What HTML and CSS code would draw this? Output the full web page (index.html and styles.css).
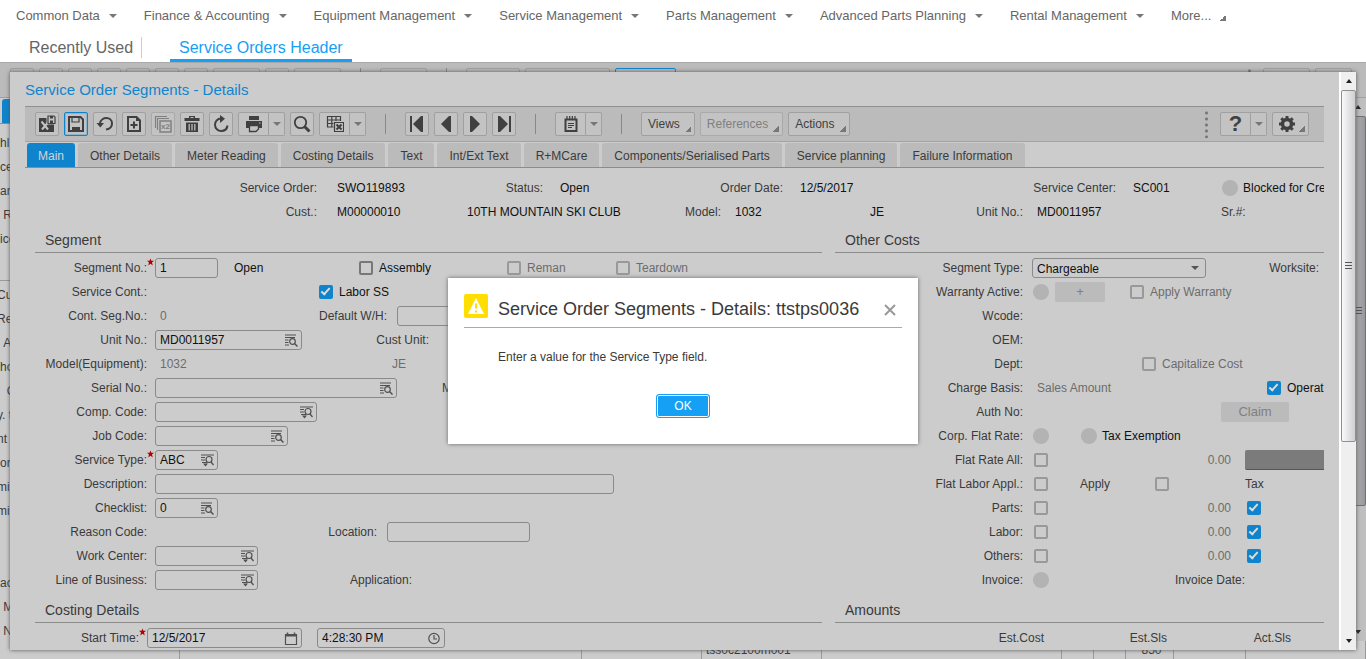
FILE: index.html
```html
<!DOCTYPE html>
<html lang="en">
<head>
<meta charset="utf-8">
<title>Service Order Segments - Details</title>
<link rel="stylesheet" href="styles.css">
</head>
<body>
<svg class="symbols" aria-hidden="true">
  <symbol id="i-save-exit" viewBox="0 0 18 18"><path d="M1 3h8v6h7v8H1z" fill="currentColor"/><path d="M3.500 6.500l6.500 8M10 7.500l-6 7" stroke="#c3c3c3" stroke-width="2"/><path d="M8.500 0H18v9.500H8.500z" fill="#c3c3c3"/><path d="M10 1h6l1 1v6.500h-7z" fill="none" stroke="currentColor" stroke-width="1.200"/><path d="M12 1h3v2.500h-3zM12 5.500h3v3h-3z" fill="currentColor"/></symbol>
  <symbol id="i-save" viewBox="0 0 18 18"><path d="M2 2h11.500L16 4.500V16H2z" fill="none" stroke="currentColor" stroke-width="2"/><path d="M5 2v5h7V2" fill="none" stroke="currentColor" stroke-width="1.200"/><path d="M5 12h8v4H5z" fill="currentColor"/></symbol>
  <symbol id="i-undo" viewBox="0 0 18 18"><path d="M4 8.500C4.500 4.500 8 3 10.500 3c3 0 5.500 2.300 5.500 5.500S13.500 14 10 14.500" fill="none" stroke="currentColor" stroke-width="2"/><path d="M.5 8h7.500l-3.700 4.500z" fill="currentColor"/></symbol>
  <symbol id="i-new" viewBox="0 0 18 18"><path d="M3 2h8.500L15 5.500V16H3z" fill="none" stroke="currentColor" stroke-width="2"/><path d="M11 2v4h4z" fill="currentColor"/><path d="M9 6.500v7M5.500 10h7" stroke="currentColor" stroke-width="2"/></symbol>
  <symbol id="i-dup" viewBox="0 0 18 18"><path d="M1.500 13V1.500H13M3.500 15V3.500H15" fill="none" stroke="currentColor" stroke-width="1.200"/><path d="M6 6h11v11H6z" fill="none" stroke="currentColor" stroke-width="1.500"/><text x="7" y="14" font-size="8" font-weight="bold" fill="currentColor" font-family="Liberation Sans, sans-serif">x2</text></symbol>
  <symbol id="i-trash" viewBox="0 0 18 18"><path d="M6 1h6v2h4.500v3h-15V3H6zM3 7.500h12V17H3z" fill="currentColor"/><path d="M7.500 2.500h3M6.200 9v6.500M9 9v6.500M11.800 9v6.500" stroke="#c3c3c3" stroke-width="1.200"/></symbol>
  <symbol id="i-refresh" viewBox="0 0 18 18"><path d="M9 3.500C5.500 3.500 3 6.500 3 9.800c0 3.500 2.800 6.200 6.200 6.200 3.300 0 5.800-2 6.300-5.500" fill="none" stroke="currentColor" stroke-width="2"/><path d="M8 0l5 3.700L8 8z" fill="currentColor"/></symbol>
  <symbol id="i-print" viewBox="0 0 18 18"><path d="M4 1h10v4H4zM1 6h16v7H1z" fill="currentColor"/><path d="M4.500 10.500h9v3.500l-2.500 2.500H4.500z" fill="#c3c3c3" stroke="currentColor" stroke-width="1.300"/><path d="M14 8h1.500" stroke="#c3c3c3" stroke-width="1.200"/></symbol>
  <symbol id="i-search" viewBox="0 0 18 18"><circle cx="7.500" cy="7.500" r="5.700" fill="none" stroke="currentColor" stroke-width="1.800"/><path d="M11.500 11.500l5 5" stroke="currentColor" stroke-width="3"/></symbol>
  <symbol id="i-table" viewBox="0 0 18 18"><path d="M1.500 1.500h13M1.500 5h13M1.500 8.500h6M1.500 12h6M1.500 1v11.500M5.800 1v11.500M10 1v5M14.500 1v5" stroke="currentColor" stroke-width="1.200" fill="none"/><path d="M8.500 7.500h9v9h-9z" fill="#c3c3c3" stroke="currentColor" stroke-width="1.200"/><path d="M10.500 9.500l5 5M15.500 9.500l-5 5" stroke="currentColor" stroke-width="2"/></symbol>
  <symbol id="i-first" viewBox="0 0 18 18"><path d="M2 1h2v16H2zM15 1v16h-2L5 9l8-8z" fill="currentColor"/></symbol>
  <symbol id="i-prev" viewBox="0 0 18 18"><path d="M14 1v16h-2L4 9l8-8z" fill="currentColor"/></symbol>
  <symbol id="i-next" viewBox="0 0 18 18"><path d="M4 1v16h2l8-8-8-8z" fill="currentColor"/></symbol>
  <symbol id="i-last" viewBox="0 0 18 18"><path d="M14 1h2v16h-2zM3 1v16h2l8-8-8-8z" fill="currentColor"/></symbol>
  <symbol id="i-note" viewBox="0 0 18 18"><path d="M3.500 4.500h11v11.500h-11z" fill="none" stroke="currentColor" stroke-width="2"/><path d="M5 1v3M7.700 1v3M10.300 1v3M13 1v3M6 8.500h6M6 10.500h6M6 12.500h4" stroke="currentColor" stroke-width="1.200"/></symbol>
  <symbol id="i-gear" viewBox="0 0 18 18"><circle cx="9" cy="9" r="4.500" fill="none" stroke="currentColor" stroke-width="3.500"/><path d="M9 1v3M9 14v3M1 9h3M14 9h3M3.300 3.300l2 2M12.700 12.700l2 2M3.300 14.700l2-2M12.700 5.300l2-2" stroke="currentColor" stroke-width="3"/></symbol>
  <symbol id="i-zoom" viewBox="0 0 14 13"><path d="M1 1h11M1 3.500h10M1 6h3.500M1 8.500h3.500M1 11h4" stroke="currentColor"/><circle cx="8.500" cy="7.500" r="2.800" fill="none" stroke="currentColor" stroke-width="1.200"/><path d="M10.500 9.500l3 3" stroke="currentColor" stroke-width="1.500"/></symbol>
  <symbol id="i-zoomdown" viewBox="0 0 14 13"><path d="M1 1h13M1 3.500h4M1 6h4M2 8.500h4" stroke="currentColor"/><circle cx="9" cy="5.500" r="3" fill="none" stroke="currentColor" stroke-width="1.200"/><path d="M11 8l2.500 3M7 8l-1 1" stroke="currentColor" stroke-width="1.300"/><path d="M3 9.500h5L5.500 12.500z" fill="currentColor"/></symbol>
  <symbol id="i-cal" viewBox="0 0 14 13"><path d="M1.500 2.500h11v10h-11z" fill="none" stroke="currentColor" stroke-width="1.200"/><path d="M1 3.500h12" stroke="currentColor" stroke-width="2"/><path d="M3.500.5v3M10.500.5v3" stroke="currentColor" stroke-width="1.500"/></symbol>
  <symbol id="i-clock" viewBox="0 0 14 13"><circle cx="7" cy="6.500" r="5.200" fill="none" stroke="currentColor" stroke-width="1.200"/><path d="M7 3v4h3" fill="none" stroke="currentColor" stroke-width="1.200"/></symbol>
  <symbol id="i-star" viewBox="0 0 8 8"><path d="M4 0l1 2.700h3L5.700 4.600 6.600 8 4 6 1.400 8l.9-3.400L0 2.700h3z" fill="#b00000"/></symbol>
</svg>

<header class="top">
  <nav class="menu">
    <a href="#">Common Data<i class="tri"></i></a>
    <a href="#">Finance &amp; Accounting<i class="tri"></i></a>
    <a href="#">Equipment Management<i class="tri"></i></a>
    <a href="#">Service Management<i class="tri"></i></a>
    <a href="#">Parts Management<i class="tri"></i></a>
    <a href="#">Advanced Parts Planning<i class="tri"></i></a>
    <a href="#">Rental Management<i class="tri"></i></a>
    <a href="#">More...<i class="corner"></i></a>
  </nav>
  <nav class="views">
    <a href="#" class="recent">Recently Used</a>
    <a href="#" class="current">Service Orders Header</a>
  </nav>
</header>

<main class="stage">
  <div class="back" aria-hidden="true">
    <div class="back-bar">
      <i class="bb"></i><i class="bb"></i><i class="bb"></i><i class="bb"></i><i class="bb"></i><i class="bb"></i><i class="bb"></i><i class="bb split-b"></i><i class="bb"></i><i class="bb split-b"></i>
      <i class="sep"></i><i class="bb split-b"></i><i class="sep"></i>
      <i class="bb w54"></i><i class="bb w85"></i><i class="bb w61 on"></i>
      <i class="dots push"></i><i class="bb split-b"></i><i class="bb w37"></i>
    </div>
    <div class="back-mid">
      <div class="back-form">
        <div class="back-tabs"><i></i></div>
        <div class="frags">
          <span>hl</span><span>ce</span><span>are</span><span>&nbsp;R</span><span>ice</span>
          <span class="frag-line"></span>
          <span class="pull">Cu</span><span class="pull">Re</span><span>&nbsp;A</span><span>ho</span><span>&nbsp;&nbsp;C</span><span class="pull">y. t</span><span class="pull">nt I</span><span>or</span><span class="pull">mi</span><span class="pull">mi</span><span></span><span></span><span>ac</span><span>&nbsp;M</span><span>&nbsp;N</span>
        </div>
      </div>
      <div class="scroll dim"><i class="up"></i><div class="track"><div class="thumb"><i class="grip"></i></div></div><i class="down"></i></div>
    </div>
    <div class="back-grid"><span></span><span></span><span></span><span class="code">tss0c2100m001</span><span></span><span></span><span></span><span class="num">850</span><span></span><span></span></div>
  </div>

  <section class="popup" aria-label="Service Order Segments - Details">
    <div class="popup-body">
      <h1>Service Order Segments - Details</h1>
      <div class="toolbar">
        <button class="btn" aria-label="Save and exit"><svg><use href="#i-save-exit"/></svg></button>
        <button class="btn on" aria-label="Save"><svg><use href="#i-save"/></svg></button>
        <button class="btn" aria-label="Undo"><svg><use href="#i-undo"/></svg></button>
        <button class="btn" aria-label="New"><svg><use href="#i-new"/></svg></button>
        <button class="btn" aria-label="Duplicate" disabled><svg><use href="#i-dup"/></svg></button>
        <button class="btn" aria-label="Delete"><svg><use href="#i-trash"/></svg></button>
        <button class="btn" aria-label="Refresh"><svg><use href="#i-refresh"/></svg></button>
        <div class="split"><button class="btn" aria-label="Print"><svg><use href="#i-print"/></svg></button><button class="btn drop" aria-label="Print options"><i class="tri"></i></button></div>
        <button class="btn" aria-label="Find"><svg><use href="#i-search"/></svg></button>
        <div class="split"><button class="btn" aria-label="Export"><svg><use href="#i-table"/></svg></button><button class="btn drop" aria-label="Export options"><i class="tri"></i></button></div>
        <i class="sep"></i>
        <button class="btn" aria-label="First"><svg><use href="#i-first"/></svg></button>
        <button class="btn" aria-label="Previous"><svg><use href="#i-prev"/></svg></button>
        <button class="btn" aria-label="Next"><svg><use href="#i-next"/></svg></button>
        <button class="btn" aria-label="Last"><svg><use href="#i-last"/></svg></button>
        <i class="sep"></i>
        <div class="split"><button class="btn" aria-label="Notes"><svg><use href="#i-note"/></svg></button><button class="btn drop" aria-label="Note options"><i class="tri"></i></button></div>
        <i class="sep"></i>
        <button class="btn text">Views<i class="corner"></i></button>
        <button class="btn text" disabled>References<i class="corner"></i></button>
        <button class="btn text">Actions<i class="corner"></i></button>
        <i class="dots push"></i>
        <div class="split"><button class="btn help">?</button><button class="btn drop" aria-label="Help options"><i class="tri"></i></button></div>
        <button class="btn gear" aria-label="Settings"><svg><use href="#i-gear"/></svg><i class="corner"></i></button>
      </div>
      <nav class="tabs">
        <a href="#" class="active">Main</a><a href="#">Other Details</a><a href="#">Meter Reading</a><a href="#">Costing Details</a><a href="#">Text</a><a href="#">Int/Ext Text</a><a href="#">R+MCare</a><a href="#">Components/Serialised Parts</a><a href="#">Service planning</a><a href="#">Failure Information</a>
      </nav>

      <div class="summary">
        <div class="row s1"><span class="lb">Service Order:</span><b>SWO119893</b><span class="lb">Status:</span><b>Open</b><span class="lb">Order Date:</span><b>12/5/2017</b><span class="lb">Service Center:</span><b>SC001</b><span class="flag"><i class="dot"></i><b>Blocked for Credit</b></span></div>
        <div class="row s2"><span class="lb">Cust.:</span><b>M00000010</b><b>10TH MOUNTAIN SKI CLUB</b><span class="lb">Model:</span><b>1032</b><b>JE</b><span class="lb">Unit No.:</span><b>MD0011957</b><span>Sr.#:</span></div>
      </div>

      <div class="columns">
        <div class="left">
          <h2>Segment</h2>
          <div class="row l1"><label class="lb" for="seg">Segment No.:<svg class="star"><use href="#i-star"/></svg></label><span class="field w63"><input id="seg" value="1"></span><b>Open</b><label class="chk strong"><input type="checkbox">Assembly</label><label class="chk off"><input type="checkbox" disabled>Reman</label><label class="chk off"><input type="checkbox" disabled>Teardown</label></div>
          <div class="row l2"><span class="lb">Service Cont.:</span><span></span><label class="chk strong"><input type="checkbox" checked>Labor SS</label></div>
          <div class="row l3"><span class="lb">Cont. Seg.No.:</span><span class="ro">0</span><label class="lb" for="wh">Default W/H:</label><span class="field w143"><input id="wh"></span></div>
          <div class="row l4"><label class="lb" for="unit">Unit No.:</label><span class="field w147"><input id="unit" value="MD0011957"><svg><use href="#i-zoom"/></svg></span><span class="lb">Cust Unit:</span></div>
          <div class="row l5"><span class="lb">Model(Equipment):</span><span class="ro">1032</span><span class="ro">JE</span></div>
          <div class="row l6"><label class="lb" for="serial">Serial No.:</label><span class="field w242"><input id="serial"><svg><use href="#i-zoom"/></svg></span><span>Model:</span></div>
          <div class="row"><label class="lb" for="comp">Comp. Code:</label><span class="field w162"><input id="comp"><svg><use href="#i-zoomdown"/></svg></span></div>
          <div class="row"><label class="lb" for="job">Job Code:</label><span class="field w133"><input id="job"><svg><use href="#i-zoom"/></svg></span></div>
          <div class="row"><label class="lb" for="stype">Service Type:<svg class="star"><use href="#i-star"/></svg></label><span class="field w63"><input id="stype" value="ABC"><svg><use href="#i-zoomdown"/></svg></span></div>
          <div class="row"><label class="lb" for="desc">Description:</label><span class="field w459"><input id="desc"></span></div>
          <div class="row"><label class="lb" for="check">Checklist:</label><span class="field w63"><input id="check" value="0"><svg><use href="#i-zoom"/></svg></span></div>
          <div class="row l12"><span class="lb">Reason Code:</span><label class="lb" for="loc">Location:</label><span class="field w143"><input id="loc"></span></div>
          <div class="row"><label class="lb" for="wc">Work Center:</label><span class="field w103"><input id="wc"><svg><use href="#i-zoomdown"/></svg></span></div>
          <div class="row l14"><label class="lb" for="lob">Line of Business:</label><span class="field w103"><input id="lob"><svg><use href="#i-zoomdown"/></svg></span><span>Application:</span></div>
          <h2 class="next">Costing Details</h2>
          <div class="row l15"><label class="lb" for="sdate">Start Time:<svg class="star"><use href="#i-star"/></svg></label><span class="field w155"><input id="sdate" value="12/5/2017"><svg><use href="#i-cal"/></svg></span><span class="field w128"><input aria-label="Start time of day" value="4:28:30 PM"><svg><use href="#i-clock"/></svg></span></div>
        </div>

        <div class="right">
          <h2>Other Costs</h2>
          <div class="row r1"><label class="lb" for="segtype">Segment Type:</label><span class="select"><select id="segtype"><option>Chargeable</option></select><i class="tri"></i></span><span class="lb">Worksite:</span></div>
          <div class="row r2"><span class="lb">Warranty Active:</span><i class="dot"></i><button class="flat w50" disabled>+</button><label class="chk off"><input type="checkbox" disabled>Apply Warranty</label></div>
          <div class="row"><span class="lb">Wcode:</span></div>
          <div class="row"><span class="lb">OEM:</span></div>
          <div class="row r5"><span class="lb">Dept:</span><label class="chk off"><input type="checkbox" disabled>Capitalize Cost</label></div>
          <div class="row r6"><span class="lb">Charge Basis:</span><span class="ro">Sales Amount</span><label class="chk strong"><input type="checkbox" checked>Operational</label></div>
          <div class="row r7"><span class="lb">Auth No:</span><button class="flat w68" disabled>Claim</button></div>
          <div class="row r8"><span class="lb">Corp. Flat Rate:</span><i class="dot"></i><span class="flag"><i class="dot"></i><b>Tax Exemption</b></span></div>
          <div class="row cost"><label class="lb" for="fra">Flat Rate All:</label><span class="chk off"><input id="fra" type="checkbox" disabled></span><span class="amt">0.00</span><i class="block"></i></div>
          <div class="row r10"><label class="lb" for="fla">Flat Labor Appl.:</label><span class="chk off"><input id="fla" type="checkbox" disabled></span><label for="app">Apply</label><span class="chk off"><input id="app" type="checkbox" disabled></span><span>Tax</span></div>
          <div class="row cost"><label class="lb" for="parts">Parts:</label><span class="chk off"><input id="parts" type="checkbox" disabled></span><span class="amt">0.00</span><span class="chk"><input aria-label="Parts tax" type="checkbox" checked></span></div>
          <div class="row cost"><label class="lb" for="labor">Labor:</label><span class="chk off"><input id="labor" type="checkbox" disabled></span><span class="amt">0.00</span><span class="chk"><input aria-label="Labor tax" type="checkbox" checked></span></div>
          <div class="row cost"><label class="lb" for="others">Others:</label><span class="chk off"><input id="others" type="checkbox" disabled></span><span class="amt">0.00</span><span class="chk"><input aria-label="Others tax" type="checkbox" checked></span></div>
          <div class="row r14"><span class="lb">Invoice:</span><i class="dot"></i><span class="lb">Invoice Date:</span></div>
          <h2 class="next">Amounts</h2>
          <div class="row r15"><span class="amt-h">Est.Cost</span><span class="amt-h">Est.Sls</span><span class="amt-h">Act.Sls</span></div>
        </div>
      </div>
    </div>
    <div class="scroll"><i class="up"></i><div class="track"><div class="thumb"><i class="grip"></i></div></div><i class="down"></i></div>
  </section>

  <div class="overlay">
    <section class="dialog" role="dialog" aria-labelledby="dlg-title">
      <header>
        <svg class="warn" viewBox="0 0 24 24" aria-hidden="true"><rect width="24" height="24" rx="2" fill="#ffde00"/><path d="M12 4l8 16H4z" fill="#fff"/><path d="M12 9.500v5M12 16.500v2" stroke="#ffde00" stroke-width="2"/></svg>
        <h2 id="dlg-title">Service Order Segments - Details: ttstps0036</h2>
        <button class="close" aria-label="Close"><svg viewBox="0 0 12 12"><path d="M1 1l10 10M11 1L1 11" stroke="#999" stroke-width="2"/></svg></button>
      </header>
      <p>Enter a value for the Service Type field.</p>
      <button class="ok">OK</button>
    </section>
  </div>
</main>
</body>
</html>
```
FILE: styles.css
```css
* { box-sizing: border-box; }

body {
  margin: 0;
  height: 100vh;
  overflow: hidden;
  display: flex;
  flex-direction: column;
  background: #fff;
  color: #3a3a3a;
  font: 12px/20px "Liberation Sans", Arial, sans-serif;
}

a { color: inherit; text-decoration: none; white-space: nowrap; }
b { font-weight: normal; color: #111; }
i { display: block; flex: none; }
h1, h2, p { margin: 0; font-weight: normal; }
button, input, select { font: inherit; color: inherit; margin: 0; }
.symbols { display: none; }

/* Top navigation */
.top { flex: none; border-bottom: 1px solid #aaa; color: #666; }
.menu { display: flex; gap: 27px; height: 32px; padding-left: 16px; font-size: 13px; }
.menu a { display: flex; align-items: center; gap: 9px; }
.views { display: flex; height: 30px; padding-left: 29px; font-size: 16px; line-height: 32px; }
.recent { position: relative; padding-right: 37px; }
.recent::after { content: ""; position: absolute; right: 28px; top: 5px; height: 21px; border-left: 1px solid #ccc; }
.current { padding: 0 9px; color: #16a0f5; border-bottom: 3px solid #16a0f5; }

.tri { border: 4px solid transparent; border-top-color: #777; border-bottom: 0; }
.corner { width: 6px; height: 6px; background: linear-gradient(135deg, transparent 50%, #777 50%); }
.menu .corner { margin-top: 3px; }

/* Page behind the popup */
.stage { flex: 1; min-height: 0; position: relative; background: #ccc; }
.back { height: 100%; display: flex; flex-direction: column; overflow: hidden; }
.back-bar { flex: none; display: flex; gap: 5px; height: 35px; padding: 5px 14px 5px 10px; background: #bbb; border-bottom: 1px solid #a0a0a0; }
.bb { width: 24px; height: 24px; border: 1px solid #a0a0a0; border-radius: 2px; }
.split-b { width: 47px; }
.w54 { width: 54px; } .w85 { width: 85px; } .w61 { width: 61px; } .w37 { width: 37px; }
.bb.on { border-color: #0f84cc; }
.back-mid { flex: 1; min-height: 0; display: flex; }
.back-form { flex: 1; }
.back-tabs { padding: 1px 0 0 2px; border-bottom: 1px solid #8c8c8c; }
.back-tabs i { width: 48px; height: 24px; background: #0f84cc; border-radius: 3px 3px 0 0; }
.frags { width: 10px; padding-top: 7px; overflow: hidden; }
.frags span { display: block; height: 24px; line-height: 24px; white-space: nowrap; }
.frags .pull { text-indent: -3px; }
.frags .frag-line { height: 30px; border-bottom: 1px solid #999; margin-bottom: 2px; }
.back-grid { flex: none; display: grid; grid-template-columns: 180px 402px 120px 120px 240px 32px 32px 48px 72px 1fr; height: 18px; }
.back-grid span { border-right: 1px solid #999; line-height: 18px; padding-left: 4px; }
.back-grid .num { text-align: center; }

/* Popup window */
.popup { position: absolute; inset: 9px 10px 9px 10px; display: flex; background: #ccc; box-shadow: 0 0 4px #555; }
.popup-body { flex: 1; min-width: 0; margin: 0 15px; overflow: hidden; }
h1 { height: 34px; font-size: 15px; line-height: 36px; color: #0f84cc; }

.toolbar { display: flex; align-items: center; gap: 5px; height: 36px; padding: 0 15px 0 10px; background: #bbb; border-top: 1px solid #909090; border-bottom: 1px solid #a4a4a4; }
.btn { flex: none; display: flex; align-items: center; justify-content: center; width: 24px; height: 24px; padding: 0; border: 1px solid #a0a0a0; border-radius: 2px; background: #c3c3c3; color: #404040; }
.btn svg { width: 18px; height: 18px; }
.btn.on { border: 1px solid #0f84cc; box-shadow: inset 0 0 0 1px #8cb4cc; }
.btn:disabled { color: #808080; border-color: #aaa; }
.split { display: flex; }
.split .btn { width: 31px; border-radius: 2px 0 0 2px; }
.split .drop { width: 16px; border-left: 0; border-radius: 0 2px 2px 0; }
.sep { width: 1px; height: 20px; margin: 0 14px; background: #888; }
.btn.text { position: relative; width: auto; padding: 0 14px 0 6px; }
.btn .corner { position: absolute; right: 3px; bottom: 3px; }
.dots { width: 3px; height: 28px; margin-right: 7px; background: radial-gradient(circle, #777 1px, transparent 2px) 0 0 / 3px 6px; }
.push { margin-left: auto; }
.btn.help { font-size: 22px; font-weight: bold; }
.btn.gear { position: relative; width: 37px; padding-right: 8px; }

.tabs { display: flex; gap: 3px; padding: 1px 2px 0; border-bottom: 1px solid #8c8c8c; }
.tabs a { padding: 0 12px; height: 24px; line-height: 26px; background: #bbb; border-radius: 3px 3px 0 0; }
.tabs .active { padding: 0 11px; background: #0f84cc; color: #d4d4d4; }

/* Form rows */
.row { display: grid; grid-template-columns: 120px 1fr; align-items: center; height: 24px; white-space: nowrap; }
.lb { text-align: right; padding-right: 8px; position: relative; }
.ro { padding-left: 5px; color: #6c6c6c; }
.summary { padding: 8px 0 4px; }
.summary .lb { padding-right: 17px; }
.summary .lb:first-child { padding-right: 20px; }
.s1 { grid-template-columns: 312px 100px 123px 120px 120px 120px 213px 89px 1fr; }
.s2 { grid-template-columns: 312px 130px 155px 113px 135px 60px 107px 184px 1fr; }
.s2 .lb { padding-right: 14px; }
.flag { display: flex; align-items: center; gap: 5px; }
.dot { width: 16px; height: 16px; border-radius: 50%; background: #b3b3b3; }

.columns { display: grid; grid-template-columns: 787px minmax(0, 1fr); gap: 13px; margin-left: 10px; }
.columns h2 { height: 25px; margin-bottom: 3px; padding-left: 10px; font-size: 14px; line-height: 24px; border-bottom: 1px solid #8c8c8c; }
.columns h2.next { height: 31px; line-height: 36px; }

.l1 { grid-template-columns: 120px 79px 125px 148px 109px 1fr; }
.l2 { grid-template-columns: 120px 164px 1fr; }
.l3 { grid-template-columns: 120px 120px 122px 1fr; }
.l3 .lb:nth-child(3) { padding-right: 10px; }
.l4 { grid-template-columns: 120px 147px 135px; }
.l5 { grid-template-columns: 120px 232px 1fr; }
.l6 { grid-template-columns: 120px 287px 1fr; }
.l12 { grid-template-columns: 120px 232px 1fr; }
.l12 .lb:nth-child(2) { padding-right: 10px; }
.l14 { grid-template-columns: 120px 195px 1fr; }
.l15 { grid-template-columns: 112px 170px 1fr; }

.right .row { grid-template-columns: 197px 1fr; }
.right .lb { padding-right: 9px; }
.right .r1 { grid-template-columns: 197px 174px 122px; }
.right .r2 { grid-template-columns: 198px 22px 75px 1fr; }
.right .r5 { grid-template-columns: 307px 1fr; }
.right .r5 .lb { padding-right: 119px; }
.right .r6 { grid-template-columns: 197px 235px 1fr; }
.right .r7 { grid-template-columns: 197px 68px; column-gap: 189px; }
.right .r8 { grid-template-columns: 198px 48px 1fr; }
.right .r8 .lb, .right .r2 .lb:first-child, .right .r14 .lb { padding-right: 10px; }
.right .cost { grid-template-columns: 197px 60px 139px 1fr; column-gap: 0; }
.right .cost .lb, .right .r10 .lb { padding-right: 9px; }
.cost > :nth-child(2), .r10 .chk { padding-left: 2px; }
.amt { text-align: right; color: #6c6c6c; }
.cost .amt + * { margin-left: 14px; }
.cost .amt + .chk { padding-left: 2px; }
.block { height: 20px; background: #7b7b7b; border-bottom: 1px solid #555; border-radius: 2px 0 0 2px; }
.right .r10 { grid-template-columns: 197px 48px 73px 92px 1fr; }
.right .r14 { grid-template-columns: 198px 48px 174px; }
.right .r15 { grid-template-columns: 209px 123px 124px; }
.amt-h { text-align: right; }

.star { position: absolute; right: 1px; top: 0; width: 7px; height: 8px; }
.field { display: flex; align-items: center; height: 20px; padding: 0 3px 0 4px; border: 1px solid #8a8a8a; border-radius: 3px; color: #111; }
.field input { flex: 1; width: 0; min-width: 0; height: 18px; padding: 0; border: 0; outline: 0; background: none; }
.field svg { flex: none; width: 14px; height: 13px; color: #505050; }
.w63 { width: 63px; } .w103 { width: 103px; } .w128 { width: 128px; } .w133 { width: 133px; }
.w143 { width: 143px; } .w147 { width: 147px; } .w155 { width: 155px; } .w162 { width: 162px; }
.w242 { width: 242px; } .w459 { width: 459px; }

.select { position: relative; height: 20px; }
.select select { width: 100%; height: 20px; padding: 0 4px; border: 1px solid #8a8a8a; border-radius: 3px; background: none; color: #111; appearance: none; }
.select .tri { position: absolute; right: 7px; top: 8px; border-top-color: #555; }

.chk { display: flex; align-items: center; gap: 6px; }
.chk.strong { color: #111; }
.chk.off { color: #6c6c6c; }
.chk input { appearance: none; flex: none; width: 14px; height: 14px; border: 2px solid #777; border-radius: 2px; }
.chk.off input { border-color: #999; }
.chk input:checked { border: 0; background: #0f84cc; }
.chk input:checked::before { content: ""; display: block; width: 3px; height: 7px; margin: 1px 0 0 4px; border: solid #ddd; border-width: 0 2px 2px 0; transform: rotate(42deg); }

.flat { height: 20px; padding: 0; border: 0; border-radius: 2px; background: #bbb; font-size: 13px; color: #808080; }
.w50 { width: 50px; } .w68 { width: 68px; }

/* Scroll bars */
.scroll { flex: none; width: 17px; display: flex; flex-direction: column; background: #efefef; border-left: 2px solid #fff; }
.scroll .up, .scroll .down { height: 18px; display: grid; place-items: center; }
.up::before, .down::before { content: ""; border: 3px solid transparent; }
.up::before { border-bottom: 4px solid #222; border-top: 0; }
.down::before { border-top: 4px solid #222; border-bottom: 0; }
.track { flex: 1; }
.thumb { height: 65%; display: grid; place-items: center; border: 1px solid #909090; border-radius: 2px; background: linear-gradient(90deg, #fafafa, #e4e4e6 50%, #cfcfd2); }
.grip { width: 7px; height: 8px; background: repeating-linear-gradient(#555 0 1px, transparent 1px 3px); }
.scroll.dim { width: 16px; background: #bfbfbf; border: 0; }
.dim .thumb { height: 77%; background: linear-gradient(90deg, #bbb, #98989c); border-color: #707070; }

/* Message dialog */
.overlay { position: absolute; inset: 0; display: grid; place-items: center; }
.dialog { width: 470px; padding: 16px 16px 26px; background: #fff; box-shadow: 0 0 4px #666; }
.dialog header { display: flex; height: 34px; border-bottom: 1px solid #aaa; }
.warn { width: 24px; height: 24px; margin-right: 10px; }
.dialog h2 { flex: 1; font-size: 18px; line-height: 30px; white-space: nowrap; }
.close { width: 24px; height: 28px; padding: 3px 0 0; border: 0; background: none; }
.close svg { display: block; width: 12px; height: 12px; margin: auto; }
.dialog p { margin: 19px 34px 27px; }
.ok { display: block; width: 54px; height: 24px; margin: auto; padding: 0; border: 1px solid #16a0f5; border-radius: 3px; background: #16a0f5; box-shadow: inset 0 0 0 1px #fff; color: #fff; }
```
